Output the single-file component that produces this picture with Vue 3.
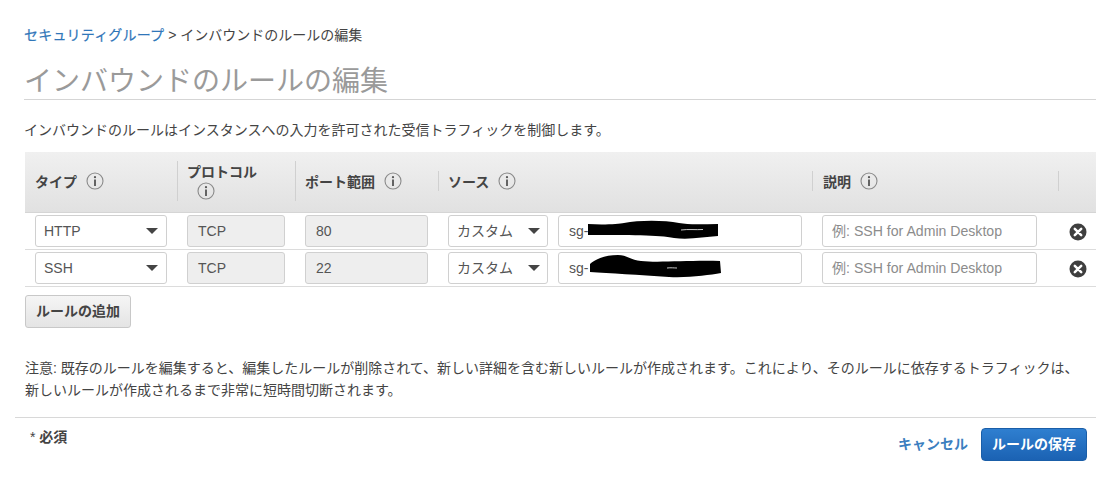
<script setup>
const heads = [
  { label: 'タイプ', tall: true },
  { label: 'プロトコル', wrap: true },
  { label: 'ポート範囲', tall: true },
  { label: 'ソース' },
  { label: '説明', nudge: true },
  { label: '' }
]
const rows = [
  {
    type: 'HTTP',
    port: '80',
    blot: 'M-1 5 C15 6 30 5 35 4 C50 1 75 1 90 4 C100 6 115 5 129 5 L129 17 C115 18 100 21 85 19 C70 16 40 16 -1 16 Z',
    sliver: 'M92 11 C100 10 106 11 114 10.5'
  },
  {
    type: 'SSH',
    port: '22',
    blot: 'M1 8 C5 4 15 -1 29 -1 C38 -1 42 4 52 5 C70 7 100 4 131 5 L132 17 C120 19 100 22 80 21 C50 19 20 17 1 16 Z',
    sliver: 'M78 12 C82 11.5 85 12 88 12'
  }
]
</script>

<template>
  <main class="page">
    <nav class="crumb"><a class="link crumb-link">セキュリティグループ</a> &gt; インバウンドのルールの編集</nav>
    <h1 class="title">インバウンドのルールの編集</h1>
    <p class="lead">インバウンドのルールはインスタンスへの入力を許可された受信トラフィックを制御します。</p>

    <section class="table">
      <div class="head">
        <div v-for="(h, i) in heads" :key="i" class="th" :class="{ first: i === 0, wrap: h.wrap, tall: h.tall, nudge: h.nudge }">
          <template v-if="h.label">
            <span>{{ h.label }}</span>
            <svg class="info" viewBox="0 0 18 18" aria-hidden="true">
              <circle cx="9" cy="9" r="8" fill="none" stroke="#8a8a8a" stroke-width="1.1" />
              <circle cx="9" cy="5.2" r="1.1" fill="#555" />
              <rect x="8.1" y="7.5" width="1.8" height="6.5" fill="#555" />
            </svg>
          </template>
        </div>
      </div>

      <div v-for="r in rows" :key="r.type" class="row">
        <div class="cell">
          <div class="field select"><span>{{ r.type }}</span><i class="caret"></i></div>
        </div>
        <div class="cell"><div class="field off">TCP</div></div>
        <div class="cell"><div class="field off">{{ r.port }}</div></div>
        <div class="cell source">
          <div class="field select custom"><span>カスタム</span><i class="caret"></i></div>
          <div class="field sg">
            sg-
            <svg class="blot" viewBox="0 0 132 24" aria-hidden="true">
              <path :d="r.blot" fill="#000" />
              <path :d="r.sliver" fill="none" stroke="#ddd" stroke-width="0.9" />
            </svg>
          </div>
        </div>
        <div class="cell"><div class="field hint"><span>例: SSH for Admin Desktop</span></div></div>
        <div class="cell close">
          <svg viewBox="0 0 18 18" class="x" aria-hidden="true">
            <circle cx="9" cy="9" r="8.5" fill="#3f3f3f" />
            <path d="M5.8 5.8 12.2 12.2 M12.2 5.8 5.8 12.2" stroke="#fff" stroke-width="2.5" stroke-linecap="round" />
          </svg>
        </div>
      </div>
    </section>

    <button class="add">ルールの追加</button>

    <p class="note">注意: 既存のルールを編集すると、編集したルールが削除されて、新しい詳細を含む新しいルールが作成されます。これにより、そのルールに依存するトラフィックは、新しいルールが作成されるまで非常に短時間切断されます。</p>

    <footer class="foot">
      <span class="req">* <b>必須</b></span>
      <div class="actions">
        <a class="link cancel">キャンセル</a>
        <button class="save">ルールの保存</button>
      </div>
    </footer>
  </main>
</template>

<style>
html, body { margin: 0; background: #fff; }
</style>

<style scoped>
.page {
  width: 1102px;
  height: 477px;
  box-sizing: border-box;
  padding: 25px 6px 0 24px;
  font-family: "Liberation Sans", "Noto Sans CJK JP", sans-serif;
  font-size: 14px;
  color: #444;
  overflow: hidden;
}
.crumb { line-height: 20px; }
.link { color: #2f76b9; }
.crumb-link { letter-spacing: 0.2px; -webkit-text-stroke: 0.2px #2f76b9; }
.title {
  margin: 17px 0 0;
  height: 37px;
  line-height: 40px;
  font-size: 28px;
  font-weight: 400;
  color: #9a9a9a;
  border-bottom: 1px solid #d5d5d5;
}
.lead { margin: 20px 0 0; line-height: 20px; }
.table { margin: 12px 0 0 1px; }
.head {
  display: grid;
  grid-template-columns: 152px 118px 143px 374px 246px 38px;
  box-sizing: border-box;
  height: 61px;
  padding-bottom: 2px;
  background: linear-gradient(#f0f0f0, #e1e1e1);
  border-bottom: 1px solid #d5d5d5;
  align-items: center;
}
.th {
  display: flex;
  align-items: center;
  gap: 9px;
  height: 20px;
  padding: 0 10px 0 9px;
  font-weight: 700;
  color: #444;
  border-left: 1px solid #d0d0d0;
  box-sizing: border-box;
}
.th.first { border-left: 0; padding-left: 10px; }
.th.nudge { padding-left: 10px; }
.th.tall { height: 40px; }
.th.wrap {
  flex-direction: column;
  align-items: flex-start;
  gap: 1px;
  height: 40px;
}
.th.wrap .info { margin-left: 10px; }
.info { width: 18px; height: 18px; flex: none; }
.row {
  display: grid;
  grid-template-columns: 152px 118px 143px 374px 246px 38px;
  height: 36px;
  border-bottom: 1px solid #dcdcdc;
  align-items: center;
}
.cell { padding: 0 10px; display: flex; gap: 10px; }
.field {
  height: 32px;
  box-sizing: border-box;
  flex: 1;
  display: flex;
  align-items: center;
  padding: 0 9px;
  border: 1px solid #d0d0d0;
  border-radius: 3px;
  background: #fff;
  color: #555;
  white-space: nowrap;
}
.select { justify-content: space-between; padding-left: 8px; padding-right: 8px; }
.custom { flex: 0 0 100px; padding-right: 7px; }
.custom span { margin-bottom: 2px; }
.caret {
  width: 0;
  height: 0;
  border-left: 6px solid transparent;
  border-right: 6px solid transparent;
  border-top: 6px solid #444;
}
.off { background: #eee; padding-left: 10px; }
.sg { position: relative; padding-left: 10px; }
.blot { position: absolute; left: 30px; top: 3px; width: 132px; height: 24px; overflow: visible; }
.hint { color: #8c8c8c; flex: 0 0 215px; font-size: 14.1px; }
.hint span { margin-bottom: 2px; }
.close { justify-content: center; padding: 2px 0 0 2px; }
.x { width: 18px; height: 18px; }
.add {
  display: block;
  margin: 8px 0 0 1px;
  width: 106px;
  height: 33px;
  padding: 0 0 3px;
  font: 700 14px "Liberation Sans", "Noto Sans CJK JP", sans-serif;
  color: #444;
  border: 1px solid #c8c8c8;
  border-radius: 3px;
  background: linear-gradient(#f5f5f5, #e4e4e4);
}
.note { margin: 29px 0 0 1px; line-height: 22px; width: 1056px; }
.foot {
  margin: 16px 0 0 -9px;
  border-top: 1px solid #d8d8d8;
  display: flex;
  justify-content: space-between;
  padding: 10px 9px 0 15px;
}
.req { line-height: 20px; margin-top: -1px; }
.actions { display: flex; align-items: center; gap: 13px; }
.cancel { font-weight: 700; margin-top: -4px; color: #3c7fc0; }
.save {
  width: 106px;
  height: 33px;
  padding: 0 0 3px;
  font: 700 14px "Liberation Sans", "Noto Sans CJK JP", sans-serif;
  color: #fff;
  border: 1px solid #1a5ea8;
  border-radius: 4px;
  background: linear-gradient(#2f7fd0, #1b62b3);
}
</style>
